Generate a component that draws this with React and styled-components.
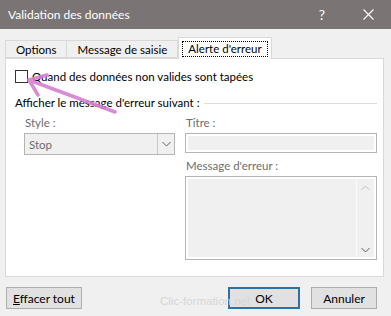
import React from "react";
import styled, { createGlobalStyle } from "styled-components";

const Global = createGlobalStyle`
  html, body { margin: 0; padding: 0; }
  body {
    width: 391px; height: 316px; overflow: hidden;
    background: #f0f0f0;
    font-family: Lato, "Noto Sans", "Liberation Sans", sans-serif;
    font-size: 11.5px;
    color: #000;
  }
`;

const Dialog = styled.div`
  position: relative;
  width: 391px;
  height: 316px;
  background: #f0f0f0;
  display: flex;
  flex-direction: column;
`;

const TitleBar = styled.div`
  height: 29px;
  background: #7a7574;
  color: #fff;
  display: flex;
  align-items: center;
  padding-left: 8px;
  font-size: 12px;
  box-sizing: border-box;
`;

const TitleText = styled.div`
  flex: 1;
`;

const TitleBtn = styled.div`
  width: 46px;
  height: 29px;
  display: flex;
  align-items: center;
  justify-content: center;
  font-size: 14px;
  color: #fff;
`;

const Body = styled.div`
  padding: 8px 7px 0 5px;
  display: flex;
  flex-direction: column;
`;

const TabRow = styled.div`
  display: flex;
  align-items: flex-end;
  height: 21px;
  position: relative;
  z-index: 1;
`;

const Tab = styled.div`
  box-sizing: border-box;
  height: ${(p) => (p.$active ? "22px" : "18px")};
  padding: 0 ${(p) => (p.$active ? "3px" : "10px")};
  border: 1px solid #d9d9d9;
  border-bottom: ${(p) => (p.$active ? "none" : "1px solid #d9d9d9")};
  border-left: ${(p) => (p.$first || p.$active ? "1px solid #d9d9d9" : "none")};
  background: ${(p) => (p.$active ? "#fff" : "#f0f0f0")};
  display: flex;
  align-items: center;
  margin-bottom: ${(p) => (p.$active ? "-1px" : "0")};
`;

const Focus = styled.span`
  border: 1px dotted #000;
  padding: 0 5px;
  line-height: 14px;
`;

const Panel = styled.div`
  box-sizing: border-box;
  width: 379px;
  height: 219px;
  background: #fff;
  border: 1px solid #d9d9d9;
  padding: 11px 6px 0 9px;
  display: flex;
  flex-direction: column;
`;

const CheckRow = styled.div`
  display: flex;
  align-items: center;
  gap: 4px;
  height: 13px;
`;

const Box = styled.div`
  box-sizing: border-box;
  width: 13px;
  height: 13px;
  border: 1px solid #333;
  background: #fff;
`;

const SectionHead = styled.div`
  display: flex;
  align-items: center;
  margin-top: 12px;
  line-height: 16px;
`;

const Rule = styled.div`
  flex: 1;
  height: 1px;
  background: #dcdcdc;
  margin-left: 4px;
`;

const Columns = styled.div`
  display: grid;
  grid-template-columns: 151px 192px;
  column-gap: 10px;
  margin-left: 9px;
  margin-top: 4px;
`;

const Col = styled.div`
  display: flex;
  flex-direction: column;
`;

const Label = styled.div`
  color: #6d6d6d;
  line-height: 16px;
  margin-left: 1px;
  margin-top: ${(p) => p.$mt || 0}px;
  margin-bottom: 2px;
`;

const Select = styled.div`
  box-sizing: border-box;
  height: 22px;
  border: 1px solid #b4b4b4;
  background: #f0f0f0;
  display: flex;
  align-items: stretch;
`;

const SelectValue = styled.div`
  flex: 1;
  color: #6d6d6d;
  padding-left: 4px;
  display: flex;
  align-items: center;
`;

const SelectBtn = styled.div`
  width: 16px;
  border-left: 1px solid #c8c8c8;
  display: flex;
  align-items: center;
  justify-content: center;
`;

const Field = styled.div`
  box-sizing: border-box;
  height: ${(p) => p.$h}px;
  border: 1px solid #b4b4b4;
  background: #fff;
  padding: 2px;
  display: flex;
`;

const FieldFill = styled.div`
  flex: 1;
  background: #f0f0f0;
`;

const Scroll = styled.div`
  width: 17px;
  background: #f0f0f0;
  border-left: 1px solid #fafafa;
  display: flex;
  flex-direction: column;
  justify-content: space-between;
  align-items: center;
  padding: 6px 0 4px;
`;

const ButtonRow = styled.div`
  display: flex;
  align-items: center;
  margin-top: 10px;
  padding-left: 1px;
`;

const Button = styled.div`
  box-sizing: border-box;
  width: ${(p) => p.$w}px;
  height: 22px;
  background: #e1e1e1;
  border: ${(p) => (p.$primary ? "2px solid #2a73a6" : "1px solid #adadad")};
  display: flex;
  align-items: center;
  justify-content: center;
  margin-left: ${(p) => p.$ml || 0}px;
  font-size: 12px;
`;

const Watermark = styled.div`
  position: absolute;
  left: 160px;
  top: 295px;
  font-family: "Liberation Sans", sans-serif;
  font-size: 11.5px;
  color: #d6d6d6;
  pointer-events: none;
`;

const Arrow = styled.svg`
  position: absolute;
  left: 0;
  top: 0;
  pointer-events: none;
`;

const Chevron = ({ up }) => (
  <svg width="9" height="6" viewBox="0 0 9 6">
    <path
      d={up ? "M0.5 5 L4.5 1 L8.5 5" : "M0.5 1 L4.5 5 L8.5 1"}
      fill="none"
      stroke={up ? "#c0c0c0" : "#606060"}
      strokeWidth="1"
    />
  </svg>
);

export default function App() {
  return (
    <>
      <Global />
      <Dialog>
        <TitleBar>
          <TitleText>Validation des données</TitleText>
          <TitleBtn>?</TitleBtn>
          <TitleBtn>
            <svg width="11" height="11" viewBox="0 0 11 11">
              <path d="M0.5 0.5 L10.5 10.5 M10.5 0.5 L0.5 10.5" stroke="#fff" strokeWidth="1.1" />
            </svg>
          </TitleBtn>
        </TitleBar>
        <Body>
          <TabRow>
            <Tab $first>Options</Tab>
            <Tab>Message de saisie</Tab>
            <Tab $active>
              <Focus>Alerte d'erreur</Focus>
            </Tab>
          </TabRow>
          <Panel>
            <CheckRow>
              <Box />
              <span>Quand des données non valides sont tapées</span>
            </CheckRow>
            <SectionHead>
              <span>Afficher le message d'erreur suivant :</span>
              <Rule />
            </SectionHead>
            <Columns>
              <Col>
                <Label>Style :</Label>
                <Select>
                  <SelectValue>Stop</SelectValue>
                  <SelectBtn>
                    <Chevron />
                  </SelectBtn>
                </Select>
              </Col>
              <Col>
                <Label>Titre :</Label>
                <Field $h={20}>
                  <FieldFill />
                </Field>
                <Label $mt={5}>Message d'erreur :</Label>
                <Field $h={84}>
                  <FieldFill />
                  <Scroll>
                    <Chevron up />
                    <Chevron up={false} />
                  </Scroll>
                </Field>
              </Col>
            </Columns>
          </Panel>
          <ButtonRow>
            <Button $w={76}>
              <span>
                <u>E</u>ffacer tout
              </span>
            </Button>
            <Button $w={72} $ml={146} $primary>
              OK
            </Button>
            <Button $w={66} $ml={11}>
              Annuler
            </Button>
          </ButtonRow>
        </Body>
        <Watermark>Clic-formation.net</Watermark>
        <Arrow width="391" height="316" viewBox="0 0 391 316">
          <g stroke="#d77fd2" strokeWidth="3.5" strokeLinecap="round" fill="none" opacity="0.9">
            <path d="M115 112 L29 80" />
            <path d="M29 80 L47 75" />
            <path d="M29 80 L38 95" />
          </g>
        </Arrow>
      </Dialog>
    </>
  );
}
